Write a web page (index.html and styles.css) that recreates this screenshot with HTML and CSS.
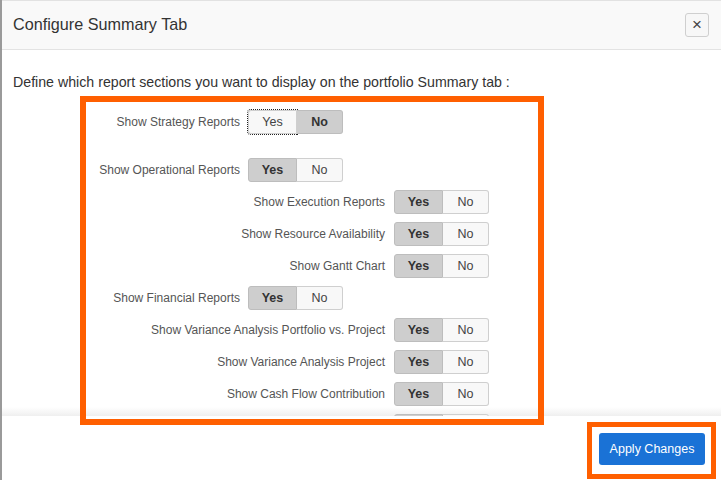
FILE: index.html
```html
<!DOCTYPE html>
<html lang="en">
<head>
  <meta charset="UTF-8" />
  <title>Configure Summary Tab</title>
  <link rel="stylesheet" href="styles.css">
</head>
<body>

  <div class="modal">
    <div class="modal-header">
      <h2>Configure Summary Tab</h2>
      <button class="close" aria-label="Close">&times;</button>
    </div>

    <div class="modal-body">
      <p class="intro">Define which report sections you want to display on the portfolio Summary tab :</p>

      <div class="form">
        <div class="row lvl1 spaced">
          <label>Show Strategy Reports</label>
          <div class="toggle">
            <button class="yes focus">Yes</button><button class="no on">No</button>
          </div>
        </div>
        <div class="row lvl1">
          <label>Show Operational Reports</label>
          <div class="toggle">
            <button class="yes on">Yes</button><button class="no">No</button>
          </div>
        </div>
        <div class="row lvl2">
          <label>Show Execution Reports</label>
          <div class="toggle">
            <button class="yes on">Yes</button><button class="no">No</button>
          </div>
        </div>
        <div class="row lvl2">
          <label>Show Resource Availability</label>
          <div class="toggle">
            <button class="yes on">Yes</button><button class="no">No</button>
          </div>
        </div>
        <div class="row lvl2">
          <label>Show Gantt Chart</label>
          <div class="toggle">
            <button class="yes on">Yes</button><button class="no">No</button>
          </div>
        </div>
        <div class="row lvl1">
          <label>Show Financial Reports</label>
          <div class="toggle">
            <button class="yes on">Yes</button><button class="no">No</button>
          </div>
        </div>
        <div class="row lvl2">
          <label>Show Variance Analysis Portfolio vs. Project</label>
          <div class="toggle">
            <button class="yes on">Yes</button><button class="no">No</button>
          </div>
        </div>
        <div class="row lvl2">
          <label>Show Variance Analysis Project</label>
          <div class="toggle">
            <button class="yes on">Yes</button><button class="no">No</button>
          </div>
        </div>
        <div class="row lvl2">
          <label>Show Cash Flow Contribution</label>
          <div class="toggle">
            <button class="yes on">Yes</button><button class="no">No</button>
          </div>
        </div>
        <!-- next row, scrolled below the fold -->
        <div class="row lvl2">
          <label></label>
          <div class="toggle">
            <button class="yes on"></button><button class="no"></button>
          </div>
        </div>
      </div>
    </div>

    <div class="modal-footer">
      <button class="primary">Apply Changes</button>
    </div>
  </div>

  <!-- highlight boxes drawn on top of the screenshot -->
  <div class="mark mark-form"></div>
  <div class="mark mark-apply"></div>

</body>
</html>
```

FILE: styles.css
```css
* {
  box-sizing: border-box;
  margin: 0;
  padding: 0;
  font-family: 'Liberation Sans', Arial, sans-serif;
}

body {
  width: 721px;
  height: 480px;
  overflow: hidden;
  background: #9a9a9a;
  position: relative;
}

.modal {
  margin-left: 2px;
  width: 719px;
  height: 480px;
  background: #fff;
  border-top: 1px solid #e2e2e2;
  display: flex;
  flex-direction: column;
}

.modal-header {
  height: 49px;
  flex: 0 0 auto;
  display: flex;
  align-items: center;
  justify-content: space-between;
  padding: 0 12px 0 11px;
  background: #f9f9f9;
  border-bottom: 1px solid #e3e3e3;
}

.modal-header h2 {
  font-size: 16.2px;
  font-weight: normal;
  color: #333;
  margin-top: -1px;
}

.close {
  width: 24px;
  height: 24px;
  border: 1px solid #cfcfcf;
  border-radius: 3px;
  background: #f7f7f7;
  color: #444;
  font-size: 17px;
  line-height: 20px;
  cursor: pointer;
}

.modal-body {
  height: 366px;
  flex: 0 0 auto;
  overflow: hidden;
  padding: 23px 11px 0;
  background: linear-gradient(to bottom, #fff calc(100% - 9px), #efefef);
}

.intro {
  font-size: 14.2px;
  line-height: 18px;
  color: #333;
  margin-bottom: 19px;
}

.row {
  display: flex;
  align-items: center;
  gap: 8px;
  margin-bottom: 8px;
}

.row.spaced {
  margin-bottom: 24px;
}

.row label {
  font-size: 12px;
  color: #555;
  text-align: right;
}

.lvl1 label {
  width: 227px;
}

.lvl2 label {
  width: 372px;
  margin-right: 1px;
}

.toggle {
  display: flex;
}

.toggle button {
  height: 24px;
  border: 1px solid #cfcfcf;
  background: #f8f8f8;
  color: #444;
  font-size: 12.5px;
  cursor: pointer;
}

.toggle .yes {
  width: 49px;
  border-radius: 3px 0 0 3px;
}

.toggle .no {
  width: 46px;
  border-left: none;
  border-radius: 0 3px 3px 0;
}

.toggle .on {
  background: #cecece;
  border-color: #bdbdbd;
  color: #333;
  font-weight: bold;
}

.toggle .focus {
  outline: 1px dotted #222;
  outline-offset: 0;
}

.modal-footer {
  flex: 1;
  display: flex;
  justify-content: flex-end;
  align-items: flex-start;
  padding: 17px 16px 0 0;
  background: #fff;
}

.primary {
  width: 106px;
  height: 32px;
  border: none;
  border-radius: 3px;
  background: #1a72d6;
  color: #fff;
  font-size: 12.5px;
  cursor: pointer;
}

.mark {
  position: absolute;
  border: 6px solid #ff5f00;
  pointer-events: none;
}

.mark-form {
  left: 80px;
  top: 96px;
  width: 464px;
  height: 329px;
}

.mark-apply {
  left: 587px;
  top: 422px;
  width: 129px;
  height: 57px;
  border-width: 5px;
}
```
